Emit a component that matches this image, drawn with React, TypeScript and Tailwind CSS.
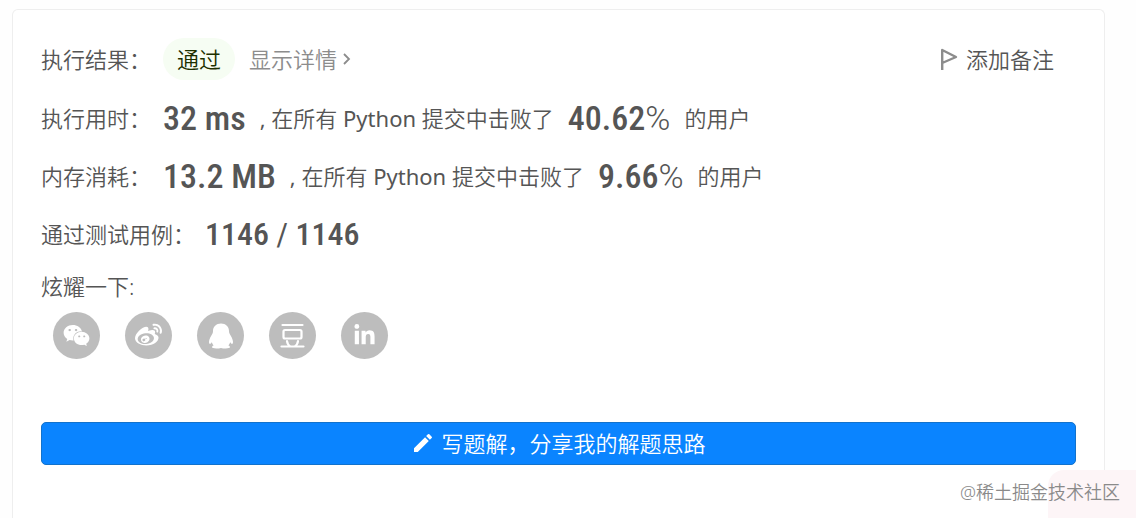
import { FaWeixin, FaWeibo, FaLinkedinIn } from "react-icons/fa";
import { MdEdit } from "react-icons/md";

function QqIcon() {
  return (
    <svg viewBox="0 0 26 26" className="size-[26px]" fill="currentColor" aria-hidden="true">
      <path d="M13 .5c-4.800 0-8 3.300-8 7.600 0 1-.1 1.600-.5 2.400C2.800 13.400 1 16.500 1 18.800c0 1.500.5 2.300 1.100 2.100.6-.2 1.200-.9 1.700-1.600.4 1.300 1 2.300 1.800 3.100-1 .4-1.600 1-1.600 1.700 0 1 1.700 1.400 4.200 1.400 2 0 3.500-.2 4.800-.6 1.300.4 2.800.6 4.800.6 2.500 0 4.200-.4 4.200-1.400 0-.7-.6-1.300-1.600-1.700.8-.8 1.400-1.800 1.800-3.100.5.7 1.100 1.400 1.700 1.600.6.2 1.100-.6 1.100-2.100 0-2.300-1.800-5.400-3.500-8.300-.4-.8-.5-1.400-.5-2.400C21 3.800 17.800.5 13 .5z" />
    </svg>
  );
}

function DoubanIcon() {
  return (
    <svg viewBox="0 0 25 25" className="size-[25px]" fill="none" stroke="currentColor" strokeWidth="2.200" strokeLinecap="round" aria-hidden="true">
      <path d="M2.500 2h20M1.500 23.500h22M7 18.200c.3 2 1.500 4.200 3 5M18 18.200c-.3 2-1.500 4.200-3 5" />
      <rect x="3.500" y="7" width="18" height="8.500" rx="1.500" />
    </svg>
  );
}

function FlagIcon() {
  return (
    <svg viewBox="0 0 18 22" className="h-[22px] w-[18px] text-[#8c8c8c]" fill="none" stroke="currentColor" strokeWidth="2.400" aria-hidden="true">
      <path d="M2.200 22V2L16 9L2.200 15" strokeLinejoin="round" />
    </svg>
  );
}

const shares = [
  { name: "微信", icon: <FaWeixin className="size-[27px]" /> },
  { name: "微博", icon: <FaWeibo className="size-[27px]" /> },
  { name: "QQ", icon: <QqIcon /> },
  { name: "豆瓣", icon: <DoubanIcon /> },
  { name: "LinkedIn", icon: <FaLinkedinIn className="size-[23px]" /> },
];

const results = [
  { label: "执行用时：", value: "32 ms", beat: "40.62" },
  { label: "内存消耗：", value: "13.2 MB", beat: "9.66" },
];

export default function App() {
  return (
    <div className="relative flex min-h-screen flex-col overflow-hidden bg-[#fefefe] pt-[9px] pr-[31px] pl-3 font-['Noto_Sans','Noto_Sans_CJK_SC',sans-serif] text-[22px] leading-8 font-[350] text-[#555555]">
      <main className="flex-1 rounded-t-md border border-b-0 border-[#eeeeee] bg-white px-7 pt-7">
        <header className="flex items-center justify-between pr-[22px]">
          <div className="flex items-center">
            <span className="w-[122px] shrink-0">执行结果：</span>
            <span className="rounded-full bg-[#f6fdf3] px-[14px] py-[5px] text-[#1c3000]">通过</span>
            <a href="#detail" className="ml-[14px] flex items-center gap-1 text-[#8c8c8c]">
              显示详情
              <svg viewBox="0 0 10 12" className="h-3 w-[10px]" fill="none" stroke="currentColor" strokeWidth="1.800" aria-hidden="true">
                <path d="M3 1l5 5-5 5" />
              </svg>
            </a>
          </div>
          <button type="button" className="flex items-center gap-2">
            <FlagIcon />
            添加备注
          </button>
        </header>

        <dl className="mt-[18px] flex flex-col gap-[18px]">
          {results.map((r) => (
            <div key={r.label} className="flex h-10 items-center">
              <dt className="w-[122px] shrink-0">{r.label}</dt>
              <dd className="flex items-center">
                <strong className="font-['Roboto_Condensed','Roboto',sans-serif] text-[34px] leading-[40px] font-medium">
                  {r.value}
                </strong>
                <span className="ml-[14px]">
                  <span className="font-normal">,</span> 在所有 <span className="font-normal">Python</span> 提交中击败了
                </span>
                <span className="ml-[14px] flex items-baseline font-['Roboto_Condensed','Roboto',sans-serif] text-[34px] leading-[40px]">
                  <strong className="font-medium">{r.beat}</strong>
                  <span className="font-['Roboto',sans-serif] font-light">%</span>
                </span>
                <span className="ml-[14px]">的用户</span>
              </dd>
            </div>
          ))}
          <div className="flex h-10 items-center">
            <dt className="w-[164px] shrink-0">通过测试用例：</dt>
            <dd className="font-['Roboto_Condensed','Roboto',sans-serif] text-[32px] leading-[40px] font-medium">
              1146 <span className="font-normal">/</span> 1146
            </dd>
          </div>
        </dl>

        <section className="mt-4">
          <h2>炫耀一下:</h2>
          <ul className="mt-[10px] flex gap-[25px] pl-3">
            {shares.map((s) => (
              <li key={s.name}>
                <button type="button" aria-label={s.name} className="flex size-[47px] items-center justify-center rounded-full bg-[#bdbdbd] text-white">
                  {s.icon}
                </button>
              </li>
            ))}
          </ul>
        </section>

        <button type="button" className="mt-[63px] flex h-[43px] w-full items-center justify-center gap-[6px] rounded-[5px] border border-[#1272cc] bg-[#0a84ff] pb-[2px] text-white">
          <MdEdit className="size-6" />
          写题解，分享我的解题思路
        </button>
      </main>

      <div className="absolute right-0 bottom-0 h-12 w-[88px] rounded-tl-2xl bg-[#fdf5f7]" />
      <p className="absolute right-4 bottom-3 text-lg text-[#8a8a8a]">@稀土掘金技术社区</p>
    </div>
  );
}
